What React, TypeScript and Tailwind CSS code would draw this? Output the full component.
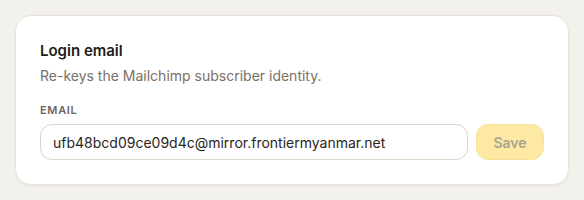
export default function App() {
  return (
    <div
      className="min-h-[200px] w-[584px] bg-[#f3f1ec] p-[15px]"
      style={{ fontFamily: "Inter, 'Noto Sans', sans-serif" }}
    >
      <div className="rounded-2xl border border-[#e8e3d9] bg-white px-6 pt-6 pb-6 shadow-[0_1px_3px_rgba(60,50,30,0.06)]">
        <h2 className="text-[15px] leading-[22px] font-semibold text-[#1f1c19]">Login email</h2>
        <p className="mt-1 text-[14px] leading-5 text-[#7a7064]">
          Re-keys the Mailchimp subscriber identity.
        </p>
        <div className="mt-4 text-[11px] leading-4 font-semibold tracking-[0.06em] text-[#6e655b] uppercase">
          Email
        </div>
        <div className="mt-1.5 flex items-center gap-2">
          <input
            className="h-9 flex-1 rounded-xl border border-[#dcd5c8] bg-white px-3 text-[14px] text-[#2a2622] outline-none"
            defaultValue="ufb48bcd09ce09d4c@mirror.frontiermyanmar.net"
            style={{ fontFamily: "Inter, 'Noto Sans', sans-serif" }}
          />
          <button
            className="h-9 w-[68px] rounded-xl border border-[#f8e29a] bg-[#fde9a3] text-[14px] font-semibold text-[#aba392]"
            disabled
          >
            Save
          </button>
        </div>
      </div>
    </div>
  );
}
